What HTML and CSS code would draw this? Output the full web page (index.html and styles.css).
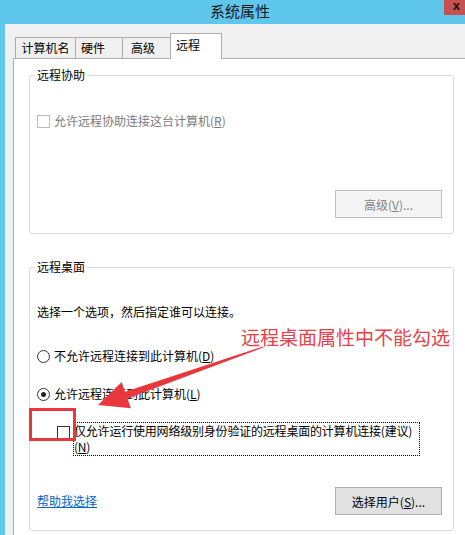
FILE: index.html
```html
<!DOCTYPE html>
<html lang="zh-CN">
<head>
    <meta charset="UTF-8">
    <title>系统属性</title>
    <link rel="stylesheet" href="styles.css">
</head>
<body>

    <!-- Barra de título -->
    <div class="titlebar">
        <div class="title">系统属性</div>
        <div class="close">x</div>
    </div>

    <div class="window">
        <!-- Abas -->
        <div class="tabs">
            <div class="tab tab-1">计算机名</div>
            <div class="tab tab-2">硬件</div>
            <div class="tab tab-3">高级</div>
            <div class="tab active">远程</div>
        </div>

        <div class="panel">
            <!-- 远程协助 -->
            <div class="group group-assist">
                <div class="group-title">远程协助</div>
                <label class="option disabled first">
                    <span class="check"></span>
                    <span>允许远程协助连接这台计算机(<u>R</u>)</span>
                </label>
                <div class="button-row">
                    <button class="btn" disabled>高级(<u>V</u>)...</button>
                </div>
            </div>

            <!-- 远程桌面 -->
            <div class="group group-desktop">
                <div class="group-title">远程桌面</div>
                <p class="hint">选择一个选项，然后指定谁可以连接。</p>
                <label class="option radio-1">
                    <span class="radio"></span>
                    <span>不允许远程连接到此计算机(<u>D</u>)</span>
                </label>
                <label class="option radio-2">
                    <span class="radio checked"></span>
                    <span>允许远程连接到此计算机(<u>L</u>)</span>
                </label>
                <label class="option nla">
                    <span class="check"></span>
                    <span class="focus-text">仅允许运行使用网络级别身份验证的远程桌面的计算机连接(建议)(<u>N</u>)</span>
                </label>
                <div class="bottom-row">
                    <a href="#" class="help-link">帮助我选择</a>
                    <button class="btn">选择用户(<u>S</u>)...</button>
                </div>
            </div>
        </div>
    </div>

    <!-- Anotação em vermelho -->
    <div class="note">远程桌面属性中不能勾选</div>
    <svg class="markup" width="465" height="535" viewBox="0 0 465 535">
        <rect x="30.5" y="409.5" width="44" height="30" fill="none" stroke="#e8383e" stroke-width="3"/>
        <polygon fill="#e8383e" points="262.8,346.6 125.1,391.8 121.7,381.9 98,405 130.9,408.3 127.5,398.4 263.3,347.6"/>
    </svg>

</body>
</html>
```

FILE: styles.css
```css
* {
    margin: 0;
    padding: 0;
    box-sizing: border-box;
}

body {
    width: 465px;
    height: 535px;
    overflow: hidden;
    position: relative;
    background-color: #f0f0f0;
    color: #000;
    font-family: "Noto Sans CJK SC", "Liberation Sans", sans-serif;
    font-size: 12px;
    line-height: 16px;
}

u {
    text-decoration: underline;
}

/* Barra de título */
.titlebar {
    height: 24px;
    background-color: #5fc6ec;
    display: flex;
    align-items: flex-start;
}

.title {
    flex: 1;
    text-align: center;
    padding-left: 36px;
    font-size: 15px;
    line-height: 22px;
    color: #1a1a1a;
}

.close {
    width: 21px;
    height: 15px;
    background-color: #c75050;
    color: #111;
    font-weight: bold;
    font-family: "Liberation Sans", sans-serif;
    font-size: 13px;
    line-height: 12px;
    text-align: right;
    padding-right: 5px;
}

/* Janela */
.window {
    height: 511px;
    border-left: 5px solid #5fc6ec;
    padding: 9px 0 0 8px;
    display: flex;
    flex-direction: column;
}

/* Abas */
.tabs {
    display: flex;
    align-items: flex-start;
    height: 26px;
    margin-left: 2px;
    margin-bottom: -1px;
    position: relative;
    z-index: 1;
}

.tab {
    height: 21px;
    margin-top: 4px;
    border: 1px solid #adadad;
    border-bottom: none;
    background-color: #f0f0f0;
    line-height: 19px;
    text-align: center;
}

.tab-1 {
    width: 61px;
}

.tab-2 {
    width: 48px;
    margin-left: -1px;
    text-align: left;
    padding-left: 5px;
}

.tab-3 {
    width: 49px;
    margin-left: -1px;
    text-align: left;
    padding-left: 8px;
}

.tab.active {
    width: 52px;
    height: 26px;
    margin-top: 0;
    margin-left: -1px;
    background-color: #fff;
    line-height: 22px;
    text-align: left;
    padding-left: 5px;
}

.panel {
    flex: 1;
    background-color: #fff;
    border-top: 1px solid #adadad;
    border-left: 1px solid #adadad;
    padding: 16px 0 0 15px;
}

/* Grupos */
.group {
    width: 425px;
    border: 1px solid #dcdcdc;
    border-radius: 3px;
    padding: 0 11px 15px 7px;
}

.group-desktop {
    margin-top: 33px;
}

.group-title {
    display: inline-block;
    margin: -9px 0 0 -2px;
    padding: 0 2px;
    background-color: #fff;
    vertical-align: top;
}

.option {
    display: flex;
    align-items: center;
    gap: 4px;
    height: 16px;
}

.option.first {
    margin-top: 21px;
}

.option.disabled {
    color: #7a7a7a;
}

.check {
    width: 13px;
    height: 13px;
    border: 1px solid #333;
    background-color: #fff;
    flex-shrink: 0;
}

.disabled .check {
    border-color: #bcbcbc;
}

.radio {
    width: 13px;
    height: 13px;
    border: 1px solid #333;
    border-radius: 50%;
    flex-shrink: 0;
    display: flex;
    align-items: center;
    justify-content: center;
}

.radio.checked::after {
    content: '';
    width: 5px;
    height: 5px;
    border-radius: 50%;
    background-color: #222;
}

.button-row {
    display: flex;
    justify-content: flex-end;
    margin-top: 61px;
}

.btn {
    width: 107px;
    height: 28px;
    border: 1px solid #adadad;
    background-color: #e1e1e1;
    color: #000;
    font-family: inherit;
    font-size: 12px;
}

.btn:disabled {
    background-color: #f4f4f4;
    border-color: #bfbfbf;
    color: #838383;
}

.hint {
    margin-top: 20px;
}

.radio-1 {
    margin-top: 28px;
}

.radio-2 {
    margin-top: 22px;
}

.option.nla {
    height: auto;
    align-items: flex-start;
    margin-top: 20px;
    margin-left: 20px;
    gap: 3px;
}

.nla .check {
    margin-top: 4px;
}

.focus-text {
    width: 347px;
    border: 1px dotted #000;
    letter-spacing: -0.2px;
}

.bottom-row {
    display: flex;
    justify-content: space-between;
    align-items: center;
    margin-top: 31px;
}

.help-link {
    color: #0066cc;
    text-decoration: underline;
}

/* Anotação */
.note {
    position: absolute;
    left: 241px;
    top: 325px;
    font-size: 19px;
    line-height: 24px;
    color: #e8414a;
    white-space: nowrap;
}

.markup {
    position: absolute;
    left: 0;
    top: 0;
    pointer-events: none;
}
```
